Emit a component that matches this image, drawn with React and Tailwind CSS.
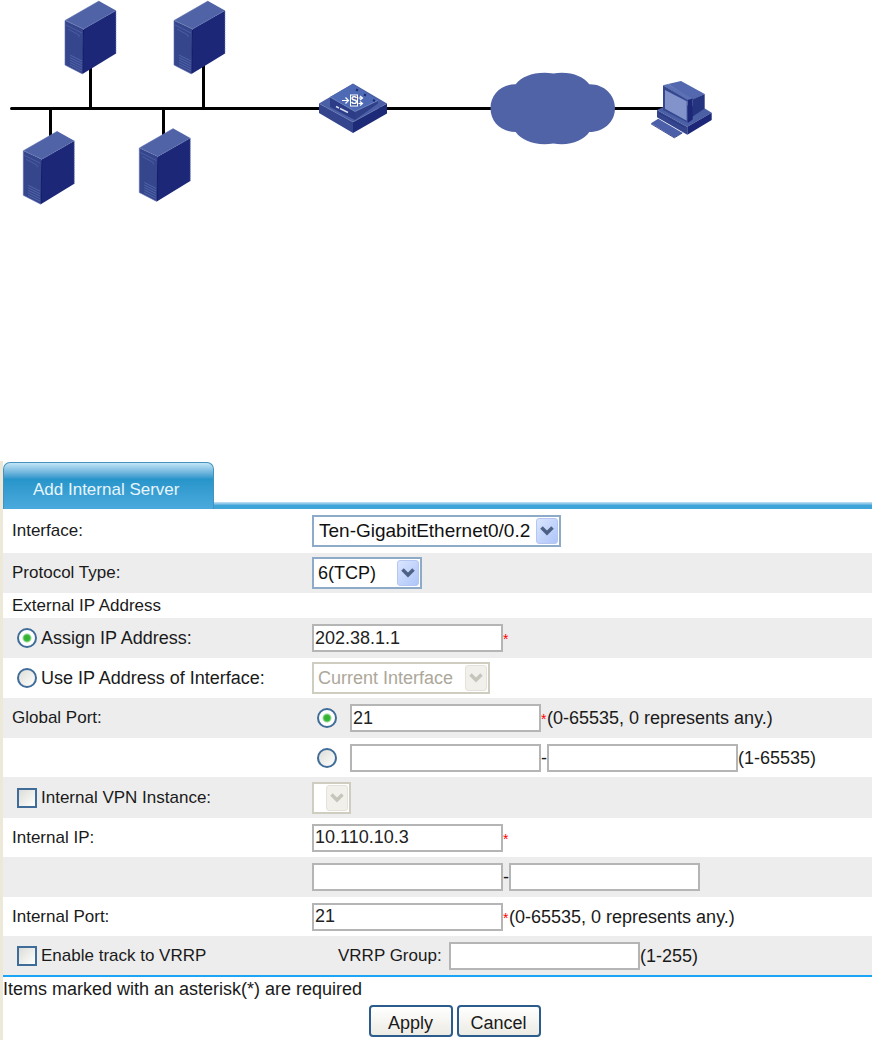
import { useState } from "react";
import clsx from "clsx";

function Server({ x, y }) {
  return (
    <g transform={`translate(${x} ${y})`}>
      <polygon points="34,1 51,10.5 18.5,29 0,20.5" fill="#4f63a6" />
      <polygon points="0,20.5 18.5,29 17.5,74 0,65" fill="#36468c" />
      <polygon points="18.5,29 51,10.5 51,53.5 17.5,74" fill="#1c2777" />
      <path d="M34 1L0 20.5V65L17.5 74" fill="none" stroke="#5a6cae" strokeWidth="0.6" />
      <path d="M1 20.5L18.5 29L51 10.5V53.5" fill="none" stroke="#7685bd" strokeWidth="0.7" strokeDasharray="1.5 0.8" />
      <path d="M1 25l16 8M3 29l11 6v2" fill="none" stroke="#5063a8" strokeWidth="0.8" />
      <path
        d="M5 55l12 6M5 57.5l12 6M5 60l12 6M5 62.5l12 6M5 65l12 6"
        fill="none"
        stroke="#5468ab"
        strokeWidth="0.9"
      />
      <path d="M18.5 30L17.8 73" stroke="#111c68" strokeWidth="1" />
    </g>
  );
}

function Gateway() {
  return (
    <g>
      <polygon points="353,83.5 387,103.5 353,122 319,103.5" fill="#4a5fa6" />
      <polygon points="319,103.5 353,122 353,133 319,113" fill="#34458d" />
      <polygon points="387,103.5 353,122 353,133 387,113.5" fill="#1d2a78" />
      <polygon points="330,97 355,111.5 355,120 330,107" fill="#2c3c86" />
      <polygon points="355,111.5 378,100.5 378,103.5 355,120" fill="#2f4089" />
      <polygon points="353,84 378,100.5 355,111.5 330,97" fill="#4f6ab4" />
      <path d="M330 97L355 111.5L378 100.5" fill="none" stroke="#7f92c9" strokeWidth="0.7" />
      <path d="M319 103.5L353 122L387 103.5" fill="none" stroke="#6f80bb" strokeWidth="0.5" />
      <path d="M356 89.5l2 1M364 94.5l2 1M373 100l2 1" stroke="#1b2b76" strokeWidth="2" />
      <path d="M336 106.5l3 1.5M340 108.5l8 4" stroke="#d5dcf0" strokeWidth="1.5" />
      <rect x="350.5" y="95" width="7" height="11" fill="#3d539d" stroke="#fff" strokeWidth="1" />
      <text x="354" y="104" textAnchor="middle" fontSize="10" fontWeight="700" fill="#fff" fontFamily="Liberation Sans, sans-serif">
        S
      </text>
      <path
        d="M342 100.5h6.5M345.5 97.5l3 3l-3 3M358.5 98h4M360 96l2.5 2l-2.5 2M358.5 103.5h4M360 101.5l2.5 2l-2.5 2"
        fill="none"
        stroke="#fff"
        strokeWidth="1.2"
      />
    </g>
  );
}

function Host() {
  return (
    <g>
      <polygon points="657,110 672,103 704,108 711.7,112.7 687.3,126.7" fill="#4b5fa5" />
      <polygon points="657,110 687.3,126.7 687.3,134.7 657,117.3" fill="#34458e" />
      <polygon points="711.7,112.7 711.7,120 687.3,134.7 687.3,126.7" fill="#1c2777" />
      <polygon points="651,123.3 658.3,118.7 682.3,132.7 674.3,137.5" fill="#4b60a8" />
      <path d="M651 123.8L674.3 137.8L682.3 133" fill="none" stroke="#1c2777" strokeWidth="0.8" />
      <polygon points="668,84 681,81 704.7,94 692.7,100" fill="#5368ae" />
      <polygon points="692.7,99.5 704.7,94 704.7,108.5 692,117" fill="#25347f" />
      <polygon points="663,85.3 668,84 692.7,98.5 687.5,101" fill="#5c70b4" />
      <polygon points="663,85.3 687.5,100 688,122.7 663,110" fill="#35478f" />
      <polygon points="687.5,100 692.7,98.5 692.7,119.5 688,122.7" fill="#1c2777" />
      <polygon points="665,90 686.7,101.3 686.7,120.7 665,108.7" fill="#8292cb" />
      <path d="M659 113l26 14.5" stroke="#26357f" strokeWidth="0.8" />
    </g>
  );
}

function NetworkDiagram() {
  return (
    <svg viewBox="0 0 720 210" className="block w-[720px] max-w-full" role="img" aria-label="Network diagram">
      <g stroke="#000" strokeWidth="3" strokeLinecap="round">
        <path d="M11.5 108.5H325M380 108.5H495M610 108.5H665" />
        <path d="M90.5 66V108M203.5 64V108M50.5 109V138M163.5 109V135" strokeLinecap="butt" />
      </g>
      <Server x={65} y={0} />
      <Server x={174} y={0} />
      <Server x={23.3} y={130.3} />
      <Server x={139.3} y={127.5} />
      <Gateway />
      <path
        fill="#4f63a6"
        d="M515.7 84.3C522 76 536 71 553.3 73.5C570 71 583 76 589.3 84.3C604 84 615 95 615 108C615 122 604 132 589.3 132C583 141 570 146 553.3 143.5C536 146 522 141 515.7 132C501 132 490.5 122 490.5 108C490.5 95 501 84 515.7 84.3Z"
      />
      <Host />
    </svg>
  );
}

function Row({ shaded, height = "min-h-10", label, children }) {
  return (
    <div className={clsx("flex items-center", height, shaded && "bg-[#ededed]")}>
      <div className="flex w-[309px] shrink-0 items-center pl-[9px]">{label}</div>
      <div className="flex items-center">{children}</div>
    </div>
  );
}

function TextBox(props) {
  return (
    <input
      type="text"
      className="h-7 w-[191px] border-2 border-[#b5b5b5] bg-white px-px text-[18px] text-[#222] outline-none"
      {...props}
    />
  );
}

function Dropdown({ className, disabled, children, ...rest }) {
  return (
    <div className="relative">
      <select
        disabled={disabled}
        className={clsx(
          "block h-8 appearance-none border-2 bg-white opacity-100 outline-none",
          disabled ? "border-[#cfcdc0] text-[#aca899]" : "border-[#8dabc8] text-[#111]",
          className
        )}
        {...rest}
      >
        {children}
      </select>
      <span
        className={clsx(
          "pointer-events-none absolute top-[3px] right-[3px] flex h-[26px] w-[22px] items-center justify-center rounded-[3px] border",
          disabled
            ? "border-[#e5e3d9] bg-[#f1f0ea] text-[#c6c5bb]"
            : "border-[#b5c6f3] bg-linear-to-br from-[#dae5ff] to-[#aec5f8] text-[#4d6185]"
        )}
      >
        <svg viewBox="0 0 14 10" className="h-[10px] w-[14px]" fill="none" stroke="currentColor" strokeWidth="3.5">
          <path d="M1.5 1.5L7 7L12.5 1.5" />
        </svg>
      </span>
    </div>
  );
}

function Radio(props) {
  return (
    <input
      type="radio"
      className="size-5 shrink-0 appearance-none rounded-full border-2 border-[#3f6c98] bg-linear-to-br from-[#dcdcd7] to-white checked:bg-[radial-gradient(circle,#2fae2f_0,#3cb93c_3px,#ffffff_5px)]"
      {...props}
    />
  );
}

function Checkbox(props) {
  return (
    <input
      type="checkbox"
      className="size-5 shrink-0 appearance-none border-2 border-[#3f6c98] bg-linear-to-br from-[#dcdcd7] to-white checked:bg-[#2fae2f]"
      {...props}
    />
  );
}

function Required() {
  return <span className="w-[6px] pt-[2px] text-[14px] leading-5 text-[#ff0000]">*</span>;
}

function Dash() {
  return <span className="w-[6px] text-[18px]">-</span>;
}

const buttonClass =
  "h-8 w-[84px] rounded-[4px] border-2 border-[#2b5c8c] bg-linear-to-b from-white to-[#ecebe4] pt-1 text-[18px] leading-6";

export default function App() {
  const [ipSource, setIpSource] = useState("assign");
  const [portMode, setPortMode] = useState("single");

  return (
    <main className="bg-white font-['Liberation_Sans',Arial,sans-serif] text-[17px] leading-6 text-[#1a1a1a]">
      <NetworkDiagram />

      <form className="mt-[251px] border-l-[3px] border-[#ece9d8] pt-px" onSubmit={(e) => e.preventDefault()}>
        <div className="flex items-end">
          <h1 className="h-[47px] w-[211px] rounded-t-[7px] border border-b-0 border-[#4593bc] bg-linear-to-b from-[#c2e5f7] via-[#2795ca] via-35% to-[#4baadd] pt-[15px] pl-[29px] text-[17px] leading-6 text-[#e6f5fc]">
            Add Internal Server
          </h1>
          <div className="h-[7px] grow bg-linear-to-b from-[#c5e4f4] to-[#3fa4d8] to-50%" />
        </div>

        <Row height="min-h-11" label={<label htmlFor="interface">Interface:</label>}>
          <Dropdown id="interface" className="w-[249px] pl-[5px] text-[19px]">
            <option>Ten-GigabitEthernet0/0.2</option>
          </Dropdown>
        </Row>

        <Row shaded label={<label htmlFor="protocol">Protocol Type:</label>}>
          <Dropdown id="protocol" className="w-[110px] pl-1 text-[18px]">
            <option>6(TCP)</option>
          </Dropdown>
        </Row>

        <Row height="min-h-[25px]" label={<span>External IP Address</span>} />

        <Row
          shaded
          label={
            <label className="flex items-center gap-1 pl-[5px] text-[18px]">
              <Radio name="ipSource" checked={ipSource === "assign"} onChange={() => setIpSource("assign")} />
              Assign IP Address:
            </label>
          }
        >
          <TextBox aria-label="IP address" defaultValue="202.38.1.1" />
          <Required />
        </Row>

        <Row
          label={
            <label className="flex items-center gap-1 pl-[5px] text-[18px]">
              <Radio name="ipSource" checked={ipSource === "interface"} onChange={() => setIpSource("interface")} />
              Use IP Address of Interface:
            </label>
          }
        >
          <Dropdown disabled={ipSource !== "interface"} aria-label="Interface address" className="w-[178px] pl-1 text-[18px]">
            <option>Current Interface</option>
          </Dropdown>
        </Row>

        <Row shaded label={<label htmlFor="globalPort">Global Port:</label>}>
          <div className="flex w-[38px] pl-[5px]">
            <Radio name="portMode" aria-label="Single port" checked={portMode === "single"} onChange={() => setPortMode("single")} />
          </div>
          <TextBox id="globalPort" defaultValue="21" />
          <Required />
          <span className="text-[18px]">(0-65535, 0 represents any.)</span>
        </Row>

        <Row height="min-h-[39px]">
          <div className="flex w-[38px] pl-[5px]">
            <Radio name="portMode" aria-label="Port range" checked={portMode === "range"} onChange={() => setPortMode("range")} />
          </div>
          <TextBox aria-label="First global port" />
          <Dash />
          <TextBox aria-label="Last global port" />
          <span className="text-[18px]">(1-65535)</span>
        </Row>

        <Row
          shaded
          height="min-h-[41px]"
          label={
            <label className="flex items-center gap-1 pl-[5px]">
              <Checkbox />
              Internal VPN Instance:
            </label>
          }
        >
          <Dropdown disabled aria-label="VPN instance" className="w-[39px]" />
        </Row>

        <Row height="min-h-[39px]" label={<label htmlFor="internalIp">Internal IP:</label>}>
          <TextBox id="internalIp" defaultValue="10.110.10.3" />
          <Required />
        </Row>

        <Row shaded>
          <TextBox aria-label="First internal IP" />
          <Dash />
          <TextBox aria-label="Last internal IP" />
        </Row>

        <Row height="min-h-[39px]" label={<label htmlFor="internalPort">Internal Port:</label>}>
          <TextBox id="internalPort" defaultValue="21" />
          <Required />
          <span className="text-[18px]">(0-65535, 0 represents any.)</span>
        </Row>

        <Row
          shaded
          height="min-h-[39px]"
          label={
            <label className="flex items-center gap-1 pl-[5px]">
              <Checkbox />
              Enable track to VRRP
            </label>
          }
        >
          <label htmlFor="vrrpGroup" className="ml-[26px] w-[111px]">
            VRRP Group:
          </label>
          <TextBox id="vrrpGroup" />
          <span className="text-[18px]">(1-255)</span>
        </Row>

        <p className="border-t-2 border-[#1ba5f5] text-[18px]">Items marked with an asterisk(*) are required</p>

        <div className="flex justify-center gap-1 pt-1 pb-[3px] pl-[34px]">
          <button type="submit" className={buttonClass}>
            Apply
          </button>
          <button type="button" className={buttonClass}>
            Cancel
          </button>
        </div>
      </form>
    </main>
  );
}
